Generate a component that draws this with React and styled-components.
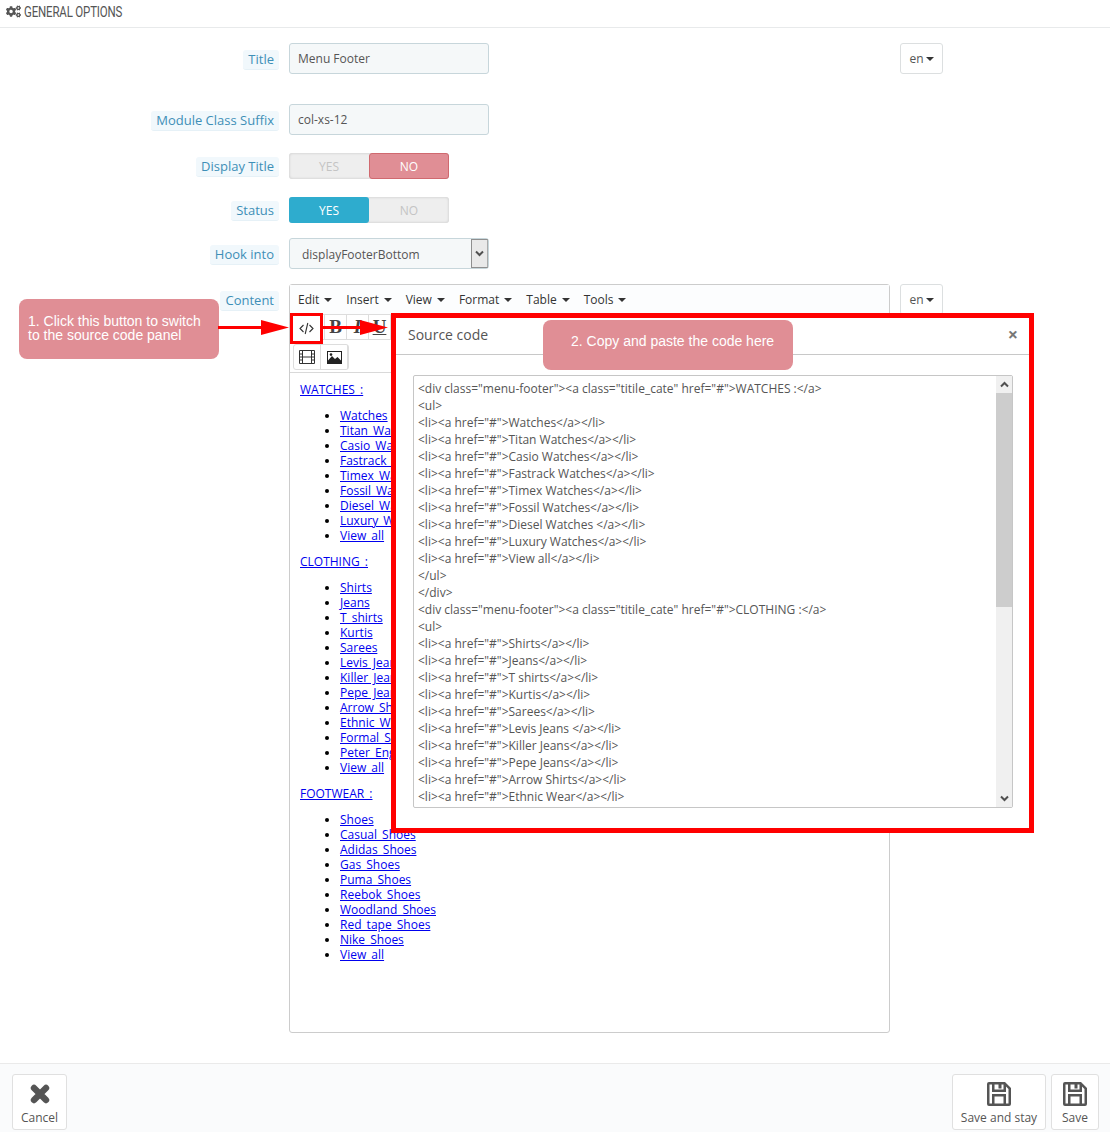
import React from "react";
import styled, { createGlobalStyle } from "styled-components";
import { FaCogs } from "react-icons/fa";

const Global = createGlobalStyle`
  html, body { margin: 0; padding: 0; background: #fff; }
  body { font-family: "Open Sans", "Liberation Sans", sans-serif; font-size: 12px; color: #555; }
  * { box-sizing: border-box; }
`;

const Page = styled.div`
  position: relative;
  width: 1110px;
  height: 1132px;
  overflow: hidden;
`;
const Header = styled.div`
  display: flex;
  align-items: center;
  height: 28px;
  padding: 0 0 4px 6px;
  gap: 3px;
  border-bottom: 1px solid #e8eaeb;
  color: #555;
  svg { width: 15px; height: 15px; }
`;
const HeaderText = styled.span`
  font-family: "Liberation Sans Narrow", "Roboto", sans-serif;
  font-size: 14px;
  letter-spacing: -0.2px;
  text-transform: uppercase;
  transform: scaleX(0.82);
  transform-origin: left center;
`;
const Form = styled.div`
  padding-top: 15px;
`;
const Row = styled.div`
  display: grid;
  grid-template-columns: 279px 601px 43px;
  column-gap: 10px;
  align-items: start;
  height: ${p => p.$h}px;
  margin-bottom: ${p => p.$gap || 0}px;
`;
const LabelCell = styled.div`
  display: flex;
  justify-content: flex-end;
  align-items: center;
  padding-top: 2px;
  height: ${p => p.$h || 31}px;
`;
const Label = styled.span`
  display: block;
  font-size: 13px;
  line-height: 19px;
  padding: 0 5px;
  color: #3e8fb7;
  background: #f1f8fc;
  border-bottom: 1px solid #e6f1f7;
  border-radius: 3px;
`;
const Input = styled.div`
  width: 200px;
  height: 31px;
  padding: 0 8px;
  display: flex;
  align-items: center;
  border: 1px solid #c7d6db;
  border-radius: 3px;
  background: #f5f8f9;
  color: #555;
  font-size: 12px;
`;
const SelectBox = styled(Input)`
  padding: 0 0 0 12px;
  justify-content: space-between;
  align-items: stretch;
  line-height: 31px;
`;
const SelectArrow = styled.span`
  width: 17px;
  background: #e9e9e9;
  border: 1px solid #8f8f8f;
  border-right-color: #aaa;
  display: flex;
  align-items: center;
  justify-content: center;
  svg { width: 9px; height: 7px; }
`;
const LangButton = styled.div`
  width: 43px;
  height: 31px;
  display: flex;
  align-items: center;
  justify-content: center;
  gap: 2px;
  border: 1px solid #dcdfe0;
  border-radius: 3px;
  background: #fff;
  color: #555;
  font-size: 12px;
`;
const Caret = styled.i`
  display: inline-block;
  width: 0;
  height: 0;
  border-left: 4px solid transparent;
  border-right: 4px solid transparent;
  border-top: 4px solid #333;
`;
const Toggle = styled.div`
  display: flex;
  width: 160px;
  height: 26px;
  border-radius: 3px;
  background: #eee;
  box-shadow: inset 0 0 3px rgba(0, 0, 0, 0.18);
`;
const ToggleOption = styled.div`
  flex: 0 0 80px;
  display: flex;
  align-items: center;
  justify-content: center;
  font-size: 12px;
  border-radius: 3px;
  color: ${p => (p.$on ? "#fff" : "#c4c4c4")};
  background: ${p => (p.$on === "no" ? "#e08e95" : p.$on === "yes" ? "#2eacce" : "transparent")};
  border: ${p => (p.$on === "no" ? "1px solid #d0696f" : "none")};
`;
const Editor = styled.div`
  width: 601px;
  height: 749px;
  border: 1px solid #ccc;
  border-radius: 3px;
  background: #fff;
  display: flex;
  flex-direction: column;
`;
const MenuBar = styled.div`
  display: flex;
  align-items: center;
  height: 29px;
  padding-left: 8px;
  gap: 14px;
  color: #333;
  font-size: 12px;
  background: #fcfdfe;
`;
const MenuItem = styled.span`
  display: flex;
  align-items: center;
  gap: 5px;
`;
const ToolArea = styled.div`
  height: 59px;
  padding: 0 0 0 3px;
  border-bottom: 1px solid #d9d9d9;
  display: flex;
  flex-direction: column;
  gap: 4px;
`;
const ToolGroup = styled.div`
  display: flex;
  width: ${p => p.$w}px;
  height: 26px;
  border: 1px solid #ddd;
  border-radius: 3px;
`;
const ToolBtn = styled.div`
  width: ${p => p.$w || 22}px;
  display: flex;
  align-items: center;
  justify-content: center;
  border-right: 1px solid #ddd;
  font-family: "Liberation Serif", serif;
  font-size: 19px;
  color: #444;
  font-weight: ${p => (p.$b ? 700 : 400)};
  font-style: ${p => (p.$i ? "italic" : "normal")};
  text-decoration: ${p => (p.$u ? "underline" : "none")};
`;
const Content = styled.div`
  padding: 9px 0 0 10px;
  line-height: 15px;
  font-size: 12px;
  word-spacing: 2px;
  flex: 1;
  overflow: hidden;
`;
const Heading = styled.p`
  margin: 0 0 11px;
`;
const Links = styled.ul`
  margin: 0 0 11px;
  padding: 0 0 0 40px;
  color: #000;
`;
const Link = styled.a`
  color: #0000ee;
  text-decoration: underline;
`;
const Footer = styled.div`
  height: 69px;
  margin-top: 30px;
  padding: 10px 11px 0 12px;
  border-top: 1px solid #eaeaea;
  background: #fafbfc;
  display: flex;
  gap: 5px;
`;
const FootBtn = styled.div`
  width: ${p => p.$w}px;
  height: 56px;
  margin-right: ${p => (p.$push ? "auto" : "0")};
  background: #fff;
  border: 1px solid #e0e0e0;
  border-radius: 3px;
  display: flex;
  flex-direction: column;
  align-items: center;
  justify-content: flex-end;
  padding-bottom: 3px;
  color: #555;
  font-size: 12px;
  line-height: 17px;
  svg { color: #555; margin-bottom: ${p => (p.$push ? 5 : 3)}px; }
`;
const Modal = styled.div`
  position: absolute;
  left: 391px;
  top: 313px;
  width: 643px;
  height: 520px;
  border: 5px solid #f00;
  background: #fff;
  display: flex;
  flex-direction: column;
`;
const ModalHead = styled.div`
  height: 37px;
  padding: 0 11px 4px 12px;
  display: flex;
  align-items: center;
  justify-content: space-between;
  border-bottom: 1px solid #c8c8c8;
  color: #555;
  font-size: 14px;
`;
const CloseMark = styled.span`
  color: #777;
  font-size: 18px;
  font-weight: 700;
  line-height: 1;
`;
const CodeBox = styled.div`
  margin: 20px 16px 20px 17px;
  flex: 1;
  display: flex;
  border: 1px solid #c6c6c6;
  border-radius: 2px;
  overflow: hidden;
`;
const CodeText = styled.div`
  flex: 1;
  padding: 4px 0 0 4px;
  font-size: 12px;
  line-height: 17px;
  color: #555;
  white-space: pre;
  overflow: hidden;
`;
const ScrollBar = styled.div`
  width: 16px;
  background: #f0f0f0;
  display: flex;
  flex-direction: column;
  align-items: center;
`;
const ScrollArrow = styled.div`
  height: 17px;
  display: flex;
  align-items: center;
  justify-content: center;
  margin-top: ${p => (p.$end ? "auto" : "0")};
  svg { width: 9px; height: 7px; }
`;
const ScrollThumb = styled.div`
  width: 16px;
  height: 214px;
  background: #cdcdcd;
`;
const Callout = styled.div`
  position: absolute;
  left: ${p => p.$x}px;
  top: ${p => p.$y}px;
  width: ${p => p.$w}px;
  height: ${p => p.$h}px;
  padding: ${p => p.$pad};
  background: #e08e95;
  border-radius: 8px;
  color: #fff;
  font-family: "Liberation Sans", Arial, sans-serif;
  font-size: 14px;
  line-height: 14px;
`;
const SourceFrame = styled.div`
  position: absolute;
  left: 290px;
  top: 313px;
  width: 33px;
  height: 31px;
  border: 3px solid #f00;
  background: #fff;
  display: flex;
  align-items: center;
  justify-content: center;
`;
const ArrowSvg = styled.svg`
  position: absolute;
  left: ${p => p.$x}px;
  top: ${p => p.$y}px;
`;

const Chevron = ({ up }) => (
  <svg viewBox="0 0 9 7">
    <path d={up ? "M1 5.5L4.5 2L8 5.5" : "M1 1.5L4.5 5L8 1.5"} fill="none" stroke="#505050" strokeWidth="2" />
  </svg>
);
const FilmIcon = () => (
  <svg width="16" height="14" viewBox="0 0 16 14">
    <path d="M.5.5h15v13H.5zM3.5.5v13M12.5.5v13M.5 4h3M.5 7h15M.5 10h3M12.5 4h3M12.5 10h3" fill="none" stroke="#333" />
  </svg>
);
const ImageIcon = () => (
  <svg width="15" height="13" viewBox="0 0 15 13">
    <rect width="15" height="13" fill="#222" />
    <rect x="1" y="1" width="13" height="11" fill="#fff" />
    <path d="M1 12V9.5L5 5l3 3 2.5-2L14 9.5V12z" fill="#222" />
    <circle cx="4" cy="3.6" r="1.3" fill="#222" />
  </svg>
);
const CodeIcon = () => (
  <svg width="15" height="13" viewBox="0 0 15 13">
    <path d="M4.5 3L1 6.5L4.5 10M10.5 3L14 6.5L10.5 10M8.8 1L6.2 12" fill="none" stroke="#333" strokeWidth="1.1" />
  </svg>
);
const CrossIcon = () => (
  <svg width="20" height="20" viewBox="0 0 20 20">
    <path d="M4 4L16 16M16 4L4 16" fill="none" stroke="#555" strokeWidth="6.4" strokeLinecap="round" />
  </svg>
);
const FloppyIcon = () => (
  <svg width="24" height="24" viewBox="0 0 24 24">
    <path
      fillRule="evenodd"
      fill="#555"
      d="M2 0H18L24 6V22a2 2 0 0 1-2 2H2a2 2 0 0 1-2-2V2a2 2 0 0 1 2-2zM2.5 2.5V21.500H5V12H19V21.500H21.500V7L19 4.500V10H5V2.500zM7.500 14.500V21.500H16.500V14.500zM7.500 2.500V7.500H16.500V2.500H14.500V6.500H11.500V2.500z"
    />
  </svg>
);

const li = t => `<li><a href="#">${t}</a></li>`;
const codeLines = [
  `<div class="menu-footer"><a class="titile_cate" href="#">WATCHES :</a>`,
  `<ul>`,
  li("Watches"), li("Titan Watches"), li("Casio Watches"), li("Fastrack Watches"),
  li("Timex Watches"), li("Fossil Watches"), li("Diesel Watches "), li("Luxury Watches"), li("View all"),
  `</ul>`,
  `</div>`,
  `<div class="menu-footer"><a class="titile_cate" href="#">CLOTHING :</a>`,
  `<ul>`,
  li("Shirts"), li("Jeans"), li("T shirts"), li("Kurtis"), li("Sarees"),
  li("Levis Jeans "), li("Killer Jeans"), li("Pepe Jeans"), li("Arrow Shirts"), li("Ethnic Wear"),
];

const sections = [
  { title: "WATCHES :", items: ["Watches", "Titan Watches", "Casio Watches", "Fastrack Watches", "Timex Watches", "Fossil Watches", "Diesel Watches", "Luxury Watches", "View all"] },
  { title: "CLOTHING :", items: ["Shirts", "Jeans", "T shirts", "Kurtis", "Sarees", "Levis Jeans", "Killer Jeans", "Pepe Jeans", "Arrow Shirts", "Ethnic Wear", "Formal Shirts", "Peter England", "View all"] },
  { title: "FOOTWEAR :", items: ["Shoes", "Casual Shoes", "Adidas Shoes", "Gas Shoes", "Puma Shoes", "Reebok Shoes", "Woodland Shoes", "Red tape Shoes", "Nike Shoes", "View all"] },
];

const Arrow = ({ x, y, w }) => (
  <ArrowSvg $x={x} $y={y} width={w} height="18" viewBox={`0 0 ${w} 18`}>
    <path d={`M0 7H${w - 28}V10H0z`} fill="#f00" />
    <path d={`M${w - 28} 1L${w} 8.5L${w - 28} 16z`} fill="#f00" />
  </ArrowSvg>
);

export default function App() {
  return (
    <Page>
      <Global />
      <Header>
        <FaCogs />
        <HeaderText>General Options</HeaderText>
      </Header>
      <Form>
        <Row $h={31} $gap={30}>
          <LabelCell><Label>Title</Label></LabelCell>
          <Input>Menu Footer</Input>
          <LangButton>en<Caret /></LangButton>
        </Row>
        <Row $h={31} $gap={18}>
          <LabelCell><Label>Module Class Suffix</Label></LabelCell>
          <Input>col-xs-12</Input>
        </Row>
        <Row $h={26} $gap={18}>
          <LabelCell $h={26}><Label>Display Title</Label></LabelCell>
          <Toggle>
            <ToggleOption>YES</ToggleOption>
            <ToggleOption $on="no">NO</ToggleOption>
          </Toggle>
        </Row>
        <Row $h={26} $gap={15}>
          <LabelCell $h={26}><Label>Status</Label></LabelCell>
          <Toggle>
            <ToggleOption $on="yes">YES</ToggleOption>
            <ToggleOption>NO</ToggleOption>
          </Toggle>
        </Row>
        <Row $h={31} $gap={15}>
          <LabelCell><Label>Hook into</Label></LabelCell>
          <SelectBox>
            displayFooterBottom
            <SelectArrow><Chevron /></SelectArrow>
          </SelectBox>
        </Row>
        <Row $h={749}>
          <LabelCell><Label>Content</Label></LabelCell>
          <Editor>
            <MenuBar>
              {["Edit", "Insert", "View", "Format", "Table", "Tools"].map(m => (
                <MenuItem key={m}>{m}<Caret /></MenuItem>
              ))}
            </MenuBar>
            <ToolArea>
              <ToolGroup $w={200}>
                <ToolBtn $w={31}><CodeIcon /></ToolBtn>
                <ToolBtn $b>B</ToolBtn>
                <ToolBtn $b $i>I</ToolBtn>
                <ToolBtn $b $u>U</ToolBtn>
              </ToolGroup>
              <ToolGroup $w={56}>
                <ToolBtn $w={27}><FilmIcon /></ToolBtn>
                <ToolBtn $w={27}><ImageIcon /></ToolBtn>
              </ToolGroup>
            </ToolArea>
            <Content>
              {sections.map(s => (
                <React.Fragment key={s.title}>
                  <Heading><Link href="#">{s.title}</Link></Heading>
                  <Links>
                    {s.items.map(i => <li key={i}><Link href="#">{i}</Link></li>)}
                  </Links>
                </React.Fragment>
              ))}
            </Content>
          </Editor>
          <LangButton>en<Caret /></LangButton>
        </Row>
      </Form>
      <Footer>
        <FootBtn $w={55} $push><CrossIcon />Cancel</FootBtn>
        <FootBtn $w={94}><FloppyIcon />Save and stay</FootBtn>
        <FootBtn $w={48}><FloppyIcon />Save</FootBtn>
      </Footer>

      <Callout $x={19} $y={299} $w={200} $h={60} $pad="15px 8px 0 9px">
        1. Click this button to switch to the source code panel
      </Callout>
      <Arrow x={218} y={319} w={71} />
      <SourceFrame><CodeIcon /></SourceFrame>
      <Modal>
        <ModalHead>
          Source code
          <CloseMark>×</CloseMark>
        </ModalHead>
        <CodeBox>
          <CodeText>
            {codeLines.map((l, i) => <div key={i}>{l}</div>)}
          </CodeText>
          <ScrollBar>
            <ScrollArrow><Chevron up /></ScrollArrow>
            <ScrollThumb />
            <ScrollArrow $end><Chevron /></ScrollArrow>
          </ScrollBar>
        </CodeBox>
      </Modal>
      <Arrow x={323} y={319} w={65} />
      <Callout $x={543} $y={320} $w={250} $h={50} $pad="14px 10px 0 28px">
        2. Copy and paste the code here
      </Callout>
    </Page>
  );
}
